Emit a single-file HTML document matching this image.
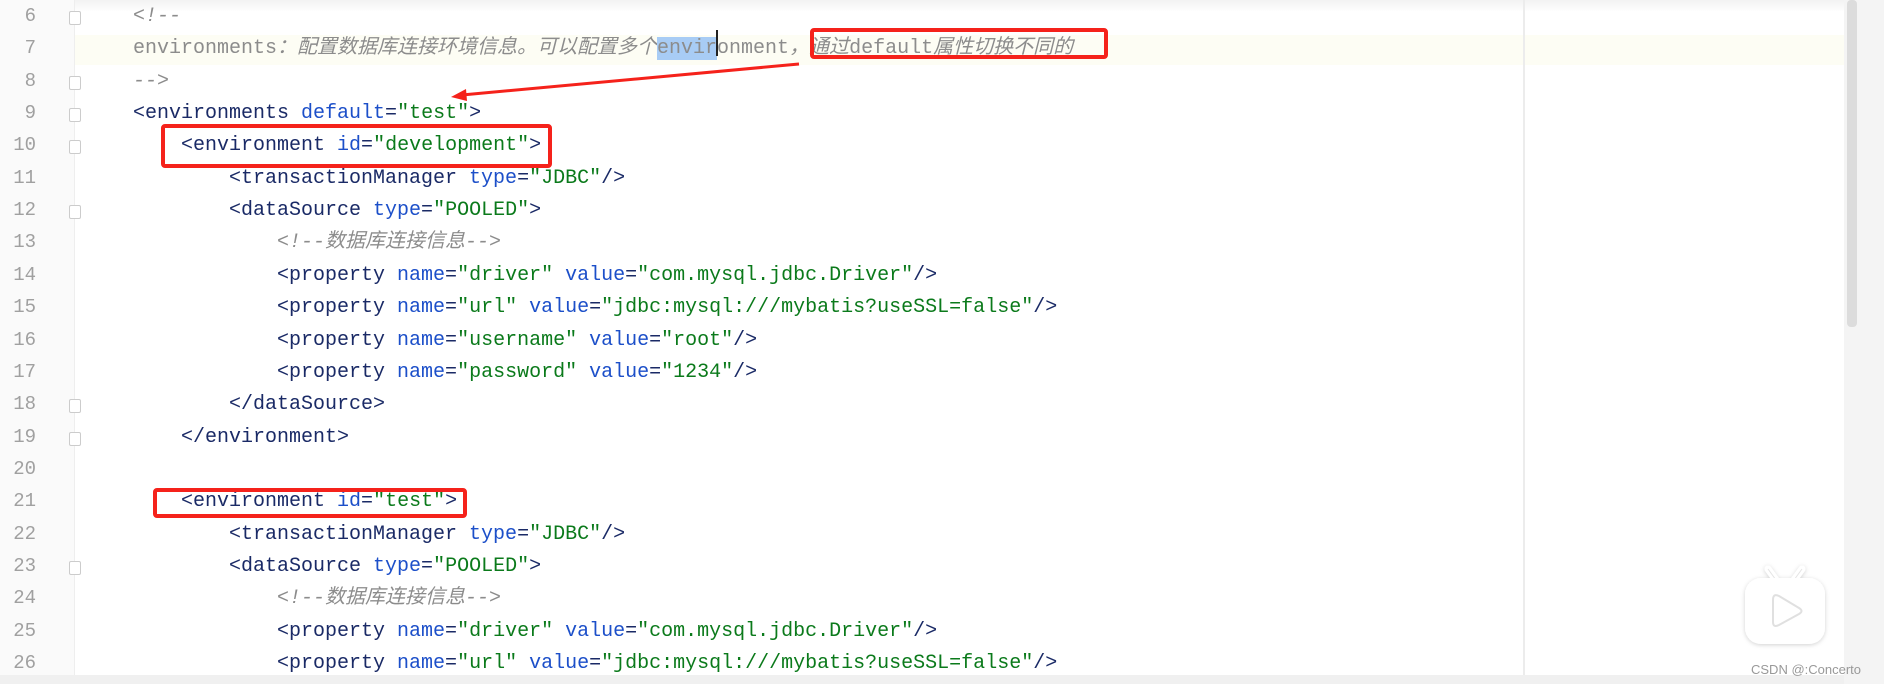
<!DOCTYPE html>
<html><head><meta charset="utf-8"><style>
body{margin:0;width:1884px;height:684px;background:#fff;overflow:hidden;position:relative;font-family:"Liberation Mono","Noto Sans CJK SC",monospace;}
.gut{position:absolute;left:0;top:0;width:74px;height:676px;background:#fafafa;border-right:1px solid #eee}
.ln{position:absolute;left:0;width:36px;text-align:right;color:#a0a0a0;font-size:19px;font-family:"Liberation Mono",monospace}
.code{position:absolute;left:133px;font-size:20px;white-space:pre;color:#1a2a66;line-height:24px}
.a{color:#1c4fc9}.v{color:#0b7a1b}.c{color:#8c8c8c;font-style:italic}
.n{font-style:normal}
.box{position:absolute;border:4px solid #f5221b;border-radius:4px}
.fold{position:absolute;left:69px;width:10px;height:12px;border:1px solid #ccc;background:#fff;border-radius:2px}
</style></head><body>
<div style="position:absolute;left:0;top:0;width:1884px;height:12px;background:linear-gradient(#f2f2f2,#fff)"></div>
<div style="position:absolute;left:0;top:35px;width:1844px;height:30px;background:#fdfdf4"></div>
<div class="gut"></div>
<div style="position:absolute;left:1523px;top:0;width:2px;height:676px;background:#ececec"></div>
<div style="position:absolute;left:1844px;top:0;width:40px;height:684px;background:#f4f4f4"></div>
<div style="position:absolute;left:1847px;top:0;width:10px;height:327px;background:#dcdcdc;border-radius:4px"></div>
<div style="position:absolute;left:0;top:675px;width:1844px;height:9px;background:#f0f0f0"></div>
<div id="lines"></div>
<script>
var L=[
[0,'<span class="c">&lt;!--</span>'],
[0,'<span class="c"><span class="n">environments</span>：配置数据库连接环境信息。可以配置多个<span class="n"><span style="background:#a8ccf5">envir</span>onment</span>，通过<span class="n">default</span>属性切换不同的</span>'],
[0,'<span class="c">--&gt;</span>'],
[0,'&lt;environments <span class="a">default</span>=<span class="v">"test"</span>&gt;'],
[1,'&lt;environment <span class="a">id</span>=<span class="v">"development"</span>&gt;'],
[2,'&lt;transactionManager <span class="a">type</span>=<span class="v">"JDBC"</span>/&gt;'],
[2,'&lt;dataSource <span class="a">type</span>=<span class="v">"POOLED"</span>&gt;'],
[3,'<span class="c">&lt;!--数据库连接信息--&gt;</span>'],
[3,'&lt;property <span class="a">name</span>=<span class="v">"driver"</span> <span class="a">value</span>=<span class="v">"com.mysql.jdbc.Driver"</span>/&gt;'],
[3,'&lt;property <span class="a">name</span>=<span class="v">"url"</span> <span class="a">value</span>=<span class="v">"jdbc:mysql:///mybatis?useSSL=false"</span>/&gt;'],
[3,'&lt;property <span class="a">name</span>=<span class="v">"username"</span> <span class="a">value</span>=<span class="v">"root"</span>/&gt;'],
[3,'&lt;property <span class="a">name</span>=<span class="v">"password"</span> <span class="a">value</span>=<span class="v">"1234"</span>/&gt;'],
[2,'&lt;/dataSource&gt;'],
[1,'&lt;/environment&gt;'],
[0,''],
[1,'&lt;environment <span class="a">id</span>=<span class="v">"test"</span>&gt;'],
[2,'&lt;transactionManager <span class="a">type</span>=<span class="v">"JDBC"</span>/&gt;'],
[2,'&lt;dataSource <span class="a">type</span>=<span class="v">"POOLED"</span>&gt;'],
[3,'<span class="c">&lt;!--数据库连接信息--&gt;</span>'],
[3,'&lt;property <span class="a">name</span>=<span class="v">"driver"</span> <span class="a">value</span>=<span class="v">"com.mysql.jdbc.Driver"</span>/&gt;'],
[3,'&lt;property <span class="a">name</span>=<span class="v">"url"</span> <span class="a">value</span>=<span class="v">"jdbc:mysql:///mybatis?useSSL=false"</span>/&gt;']];
var h='';
for(var i=0;i<L.length;i++){var y=17+i*32.35;
h+='<div class="ln" style="top:'+(y-12)+'px">'+(i+6)+'</div>';
h+='<div class="code" style="top:'+(y-12)+'px;left:'+(133+L[i][0]*48)+'px">'+L[i][1]+'</div>';}
[0,2,3,4,6,12,13,17].forEach(function(i){h+='<div class="fold" style="top:'+(17+i*32.35-6)+'px"></div>'});
document.getElementById('lines').innerHTML=h;
</script>
<div style="position:absolute;left:716px;top:30px;width:2px;height:26px;background:#222"></div>
<div class="box" style="left:810px;top:28px;width:290px;height:23px"></div>
<div class="box" style="left:161px;top:124px;width:383px;height:36px"></div>
<div class="box" style="left:153px;top:488px;width:306px;height:22px"></div>
<svg style="position:absolute;left:0;top:0" width="1884" height="684"><defs><filter id="sh" x="-30%" y="-30%" width="160%" height="160%"><feDropShadow dx="0" dy="1" stdDeviation="2" flood-color="#000" flood-opacity="0.18"/></filter></defs>
<line x1="799" y1="64" x2="462" y2="95" stroke="#f5221b" stroke-width="3"/><polygon points="451,97 466,89 467,101" fill="#f5221b"/>
<g transform="translate(1744,565)" filter="url(#sh)"><path d="M24 4 L32 15 M58 4 L50 15" stroke="#fff" stroke-width="7" stroke-linecap="round"/><path d="M24 4 L32 15 M58 4 L50 15" stroke="#e4e4e4" stroke-width="1" fill="none"/><rect x="1" y="13" width="80" height="66" rx="16" fill="#fff"/><path d="M29 35 Q29 28 35 31 L55 43 Q60 46 55 49 L35 60 Q29 63 29 57 Z" fill="#fff" stroke="#e0e0e0" stroke-width="2"/></g></svg>
<div style="position:absolute;left:1751px;top:662px;font-family:'Liberation Sans',sans-serif;font-size:13px;color:#999">CSDN @:Concerto</div>
</body></html>
